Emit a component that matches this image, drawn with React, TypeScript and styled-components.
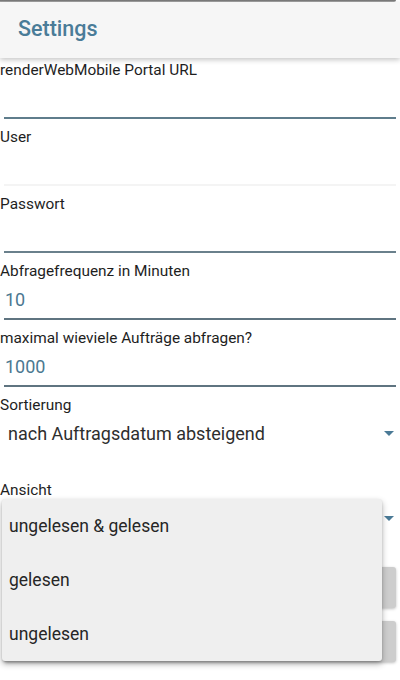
import styled, { createGlobalStyle } from "styled-components"

const GlobalStyle = createGlobalStyle`
  body {
    margin: 0;
    background: #ffffff;
  }
`

interface LineProps {
  $line: string
}
interface ValueProps {
  $color: string
}

const Page = styled.div`
  width: 400px;
  height: 680px;
  overflow: hidden;
  position: relative;
  background: #ffffff;
  font-family: Roboto, "Noto Sans", sans-serif;
`
const TopEdge = styled.div`
  height: 2px;
  margin-right: 4px;
  background: linear-gradient(#6a6a6a, #b0b0b0);
  border-radius: 0 0 3px 0;
`
const Header = styled.header`
  height: 56px;
  box-sizing: border-box;
  display: flex;
  align-items: center;
  padding: 0 0 4px 18px;
  background: #f6f6f6;
  box-shadow: 0 2px 5px rgba(0, 0, 0, 0.22);
  position: relative;
  z-index: 1;
`
const Title = styled.h1`
  margin: 0;
  font-size: 21.5px;
  font-weight: 500;
  color: #4a7c98;
`
const Form = styled.div`
  display: flex;
  flex-direction: column;
  padding-top: 4px;
`
const Field = styled.div`
  display: flex;
  flex-direction: column;
  margin-bottom: 10px;
  position: relative;
`
const Label = styled.label`
  font-size: 15.4px;
  line-height: 16px;
  color: #1e1e1e;
  white-space: nowrap;
`
const InputBox = styled.div<LineProps>`
  height: 41px;
  margin: 0 4px;
  padding: 2px 0 0 1px;
  display: flex;
  align-items: center;
  box-sizing: border-box;
  border-bottom: 2px solid ${({ $line }) => $line};
`
const Value = styled.span<ValueProps>`
  font-size: 18px;
  color: ${({ $color }) => $color};
`
const SelectRow = styled.div`
  height: 40px;
  display: flex;
  align-items: center;
  justify-content: space-between;
  padding: 0 6px 0 8px;
  margin-bottom: 19px;
`
const SelectValue = styled.span`
  font-size: 18px;
  color: #2e2e2e;
`
const Arrow = styled.span`
  width: 0;
  height: 0;
  margin-left: auto;
  border-left: 5px solid transparent;
  border-right: 5px solid transparent;
  border-top: 5px solid #4a7a96;
`
const Buttons = styled.div`
  display: flex;
  flex-direction: column;
  gap: 13px;
  margin: 0 4px;
`
const Button = styled.div`
  height: 41px;
  background: #cdcdcd;
  border-radius: 3px;
  box-shadow: 0 1px 3px rgba(0, 0, 0, 0.25);
`
const Menu = styled.ul`
  position: absolute;
  left: 2px;
  top: 17px;
  width: 380px;
  margin: 0;
  padding: 0;
  list-style: none;
  background: #efefef;
  border-radius: 3px;
  box-shadow: 0 3px 6px rgba(0, 0, 0, 0.3), 0 1px 2px rgba(0, 0, 0, 0.15);
  z-index: 5;
`
const MenuItem = styled.li`
  height: 54px;
  display: flex;
  align-items: center;
  padding-left: 7px;
  font-size: 17.5px;
  color: #262626;
`

const fields = [
  { label: "renderWebMobile Portal URL", value: "", line: "#5f7d8c" },
  { label: "User", value: "", line: "#f4f4f4" },
  { label: "Passwort", value: "", line: "#6a808c" },
  { label: "Abfragefrequenz in Minuten", value: "10", line: "#5f7480" },
  { label: "maximal wieviele Aufträge abfragen?", value: "1000", line: "#5f7480" },
]

const viewOptions = ["ungelesen & gelesen", "gelesen", "ungelesen"]

export default function App() {
  return (
    <Page>
      <GlobalStyle />
      <TopEdge />
      <Header>
        <Title>Settings</Title>
      </Header>
      <Form>
        {fields.map((field) => (
          <Field key={field.label}>
            <Label>{field.label}</Label>
            <InputBox $line={field.line}>
              <Value $color="#4b7891">{field.value}</Value>
            </InputBox>
          </Field>
        ))}
        <Field>
          <Label>Sortierung</Label>
          <SelectRow>
            <SelectValue>nach Auftragsdatum absteigend</SelectValue>
            <Arrow />
          </SelectRow>
        </Field>
        <Field>
          <Label>Ansicht</Label>
          {/* the open menu covers the selected value */}
          <SelectRow>
            <Arrow />
          </SelectRow>
          <Menu>
            {viewOptions.map((option) => (
              <MenuItem key={option}>{option}</MenuItem>
            ))}
          </Menu>
        </Field>
        <Buttons>
          <Button />
          <Button />
        </Buttons>
      </Form>
    </Page>
  )
}
